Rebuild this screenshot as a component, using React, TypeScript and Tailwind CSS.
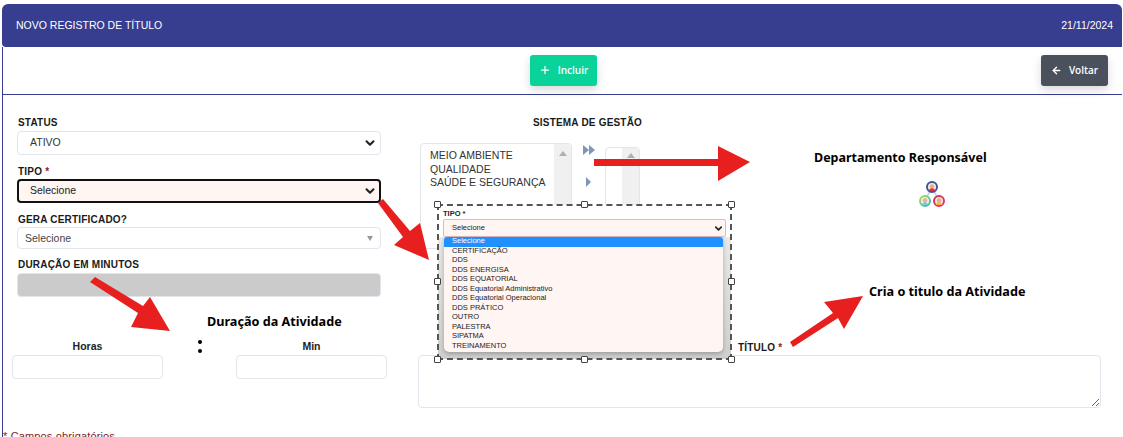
import { ArrowLeft, ChevronDown, Plus } from 'lucide-react'

const options = [
  'CERTIFICAÇÃO',
  'DDS',
  'DDS ENERGISA',
  'DDS EQUATORIAL',
  'DDS Equatorial Administrativo',
  'DDS Equatorial Operacional',
  'DDS PRÁTICO',
  'OUTRO',
  'PALESTRA',
  'SIPATMA',
  'TREINAMENTO'
]

function Label({ children }: { children: React.ReactNode }) {
  return <p className="h-[16px] pl-[1px] text-[10px] leading-[18px] font-bold tracking-[0.2px] text-[#1a1a1a]">{children}</p>
}

function Handle({ className }: { className: string }) {
  return <span className={`absolute w-[7px] h-[7px] rounded-[1px] border border-[#444] bg-white ${className}`} />
}

function OrgIcon() {
  return (
    <svg width="28" height="28" viewBox="0 0 28 28" fill="none">
      <defs>
        <linearGradient id="ringGreen" x1="0" y1="0" x2="1" y2="1">
          <stop offset="0" stopColor="#a8e04a" />
          <stop offset="1" stopColor="#2fb5c9" />
        </linearGradient>
        <linearGradient id="ringRed" x1="0" y1="0" x2="1" y2="1">
          <stop offset="0" stopColor="#c8394f" />
          <stop offset="1" stopColor="#e8307a" />
        </linearGradient>
      </defs>
      <path d="M14 8 L7 20 M14 8 L21 20" stroke="#c9cde8" strokeWidth="1.5" />
      <circle cx="14" cy="7" r="5" fill="#f6ece8" stroke="#3b5698" strokeWidth="2" />
      <circle cx="14" cy="6.5" r="2.2" fill="#eba78f" />
      <path d="M11 11 a3 2.8 0 0 1 6 0 Z" fill="#d9363e" />
      <circle cx="7" cy="21" r="5" fill="#f4f1e6" stroke="url(#ringGreen)" strokeWidth="2" />
      <circle cx="7" cy="20.5" r="2.4" fill="#e8b3a0" />
      <path d="M4 25 a3 2.8 0 0 1 6 0 Z" fill="#7cc7d8" />
      <circle cx="21" cy="21" r="5" fill="#f8ebe6" stroke="url(#ringRed)" strokeWidth="2" />
      <circle cx="21" cy="20.5" r="2.4" fill="#e8b08f" />
      <path d="M18 25 a3 2.8 0 0 1 6 0 Z" fill="#f0b93a" />
    </svg>
  )
}

export default function App() {
  return (
    <div className="relative h-[437px] overflow-hidden bg-white pt-1 pl-[2px] pr-px font-['Liberation_Sans',Arial,sans-serif] text-[#212529]">
      <div className="flex h-[43px] items-center justify-between rounded-t-md rounded-bl-sm bg-[#373d8f] pl-[14px] pr-[9px] text-[10.5px] text-white">
        <span>NOVO REGISTRO DE TÍTULO</span>
        <span>21/11/2024</span>
      </div>

      <div className="h-[390px] border-l border-[#373d8f]">
        <div className="flex h-[48px] items-center border-b border-[#373d8f] pb-[1px]">
          <button className="ml-[527px] flex h-[31px] w-[67px] items-center justify-center gap-[7px] rounded-[3px] bg-[#0ad39a] text-[10px] font-semibold text-white shadow-[0_4px_10px_rgba(0,0,0,0.15)] font-['Open_Sans',sans-serif]">
            <Plus size={12} strokeWidth={2.5} />
            Incluir
          </button>
          <button className="ml-auto mr-[14px] flex h-[31px] w-[67px] items-center justify-center gap-[7px] rounded-[3px] bg-[#4a505c] text-[10px] font-semibold text-white shadow-[0_4px_10px_rgba(0,0,0,0.15)] font-['Open_Sans',sans-serif]">
            <ArrowLeft size={11} strokeWidth={3} />
            Voltar
          </button>
        </div>

        <div className="flex pt-[19px]">
          <div className="ml-[9px] w-[375px] shrink-0">
            <div className="ml-[5px] w-[364px]">
              <Label>STATUS</Label>
              <div className="mt-[1px] flex h-[24px] items-center justify-between rounded-[4px] border border-[#e2e5ec] pl-[12px] pr-[3px] text-[10.5px] text-[#333]">
                ATIVO
                <ChevronDown size={14} strokeWidth={3.5} className="text-[#222]" />
              </div>
              <div className="mt-[8px]">
                <Label>
                  TIPO <span className="text-[#8b1a1a]">*</span>
                </Label>
              </div>
              <div className="flex h-[24px] items-center justify-between rounded-[4px] border-2 border-[#111] bg-[#fff5f3] pl-[11px] pr-[2px] text-[10.5px] text-[#222]">
                Selecione
                <ChevronDown size={14} strokeWidth={3.5} className="text-[#222]" />
              </div>
              <div className="mt-[8px]">
                <Label>GERA CERTIFICADO?</Label>
              </div>
              <div className="flex h-[22px] items-center justify-between rounded-[4px] border border-[#e2e5ec] pt-[1px] pl-[7px] pr-[7px] text-[10.5px] text-[#444]">
                Selecione
                <span className="h-0 w-0 border-x-[3px] border-t-[5px] border-x-transparent border-t-[#999]" />
              </div>
              <div className="mt-[7px]">
                <Label>DURAÇÃO EM MINUTOS</Label>
              </div>
              <div className="mt-[1px] h-[24px] rounded-[4px] border border-[#e2e5ec] bg-[#cbcbcb]" />
            </div>

            <div className="mt-[41px] flex items-start">
              <div className="w-[151px]">
                <p className="h-[17px] text-center text-[10.5px] leading-[17px] font-bold text-[#222]">Horas</p>
                <div className="h-[24px] rounded-[4px] border border-[#e2e5ec]" />
              </div>
              <div className="flex w-[73px] flex-col items-center gap-[5px] pt-[2px]">
                <span className="h-[4px] w-[4px] rounded-full bg-black" />
                <span className="h-[4px] w-[4px] rounded-full bg-black" />
              </div>
              <div className="w-[151px]">
                <p className="h-[17px] text-center text-[10.5px] leading-[17px] font-bold text-[#222]">Min</p>
                <div className="h-[24px] rounded-[4px] border border-[#e2e5ec]" />
              </div>
            </div>

            <p className="mt-[50px] -ml-[9px] text-[11px] leading-[14px] tracking-[0.15px] text-[#7f1d1d]">* Campos obrigatórios</p>
          </div>

          <div className="ml-[31px] w-[683px] shrink-0">
            <p className="h-[16px] w-[339px] text-center text-[10px] leading-[18px] font-bold tracking-[0.2px] text-[#1a1a1a]">
              SISTEMA DE GESTÃO
            </p>
            <div className="mt-[13px] flex h-[196px] items-start">
              <div className="ml-[2px] flex h-[106px] w-[152px] rounded-[4px] border border-[#e2e5ec] text-[10.5px] leading-[13.5px] text-[#333]">
                <div className="flex-1 pt-[5px] pl-[9px]">
                  <p>MEIO AMBIENTE</p>
                  <p>QUALIDADE</p>
                  <p>SAÚDE E SEGURANÇA</p>
                </div>
                <div className="flex w-[17px] justify-center bg-[#f0f0f0] pt-[7px]">
                  <span className="h-0 w-0 border-x-[4px] border-b-[5px] border-x-transparent border-b-[#b0b0b0]" />
                </div>
              </div>
              <div className="flex w-[33px] flex-col items-center pt-[2px]">
                <div className="flex">
                  <span className="h-0 w-0 border-y-[5px] border-l-[6px] border-y-transparent border-l-[#7f97b5]" />
                  <span className="h-0 w-0 border-y-[5px] border-l-[6px] border-y-transparent border-l-[#7f97b5]" />
                </div>
                <span className="mt-[22px] h-0 w-0 border-y-[5px] border-l-[5px] border-y-transparent border-l-[#7f97b5]" />
              </div>
              <div className="mt-[4px] flex h-[102px] w-[35px] justify-end rounded-[4px] border border-[#e2e5ec]">
                <div className="flex w-[17px] justify-center bg-[#f0f0f0] pt-[5px]">
                  <span className="h-0 w-0 border-x-[4px] border-b-[5px] border-x-transparent border-b-[#b0b0b0]" />
                </div>
              </div>
            </div>
            <div className="h-[14px] pl-[320px] text-[10px] leading-[17px] font-bold tracking-[0.2px] text-[#1a1a1a]">
              TÍTULO <span className="text-[#8b1a1a]">*</span>
            </div>
            <textarea className="mt-[2px] block h-[53px] w-[683px] rounded-[4px] border border-[#e2e5ec] outline-none" />
          </div>
        </div>
      </div>

      <div className="absolute left-[438px] top-[205px] h-[154px] w-[293px] bg-white">
        <div className="px-[5px] pt-[4px]">
          <p className="h-[9px] text-[7.5px] leading-[9px] font-bold">TIPO *</p>
          <div className="mt-[1px] flex h-[18px] items-center justify-between rounded-[2px] border border-[#e0b9b9] bg-[#fff5f3] pl-[8px] pr-[1px] text-[7.5px] text-[#222]">
            Selecione
            <ChevronDown size={11} strokeWidth={3.5} className="text-[#222]" />
          </div>
        </div>
        <div className="absolute bottom-0 left-0 right-0 h-[122px] bg-gradient-to-b from-[#e8e8e8] to-[#cfcfcf]" />
        <div className="absolute left-[6px] top-[32px] h-[115px] w-[279px] overflow-hidden rounded-b-[5px] rounded-t-[3px] bg-[#fff5f3] text-[7.5px] leading-[9.5px] text-[#222] shadow-[0_2px_4px_rgba(0,0,0,0.25)]">
          <p className="h-[10px] bg-[#1e90ff] pl-[8px] leading-[8px] text-white">Selecione</p>
          <div className="-mt-[1.5px]">
            {options.map(option => (
              <p className="pl-[8px]" key={option}>
                {option}
              </p>
            ))}
          </div>
        </div>
      </div>
      <div className="absolute left-[437px] top-[204px] h-[156px] w-[295px] border-2 border-dashed border-[#555]">
        <Handle className="-left-[5px] -top-[5px]" />
        <Handle className="left-[142px] -top-[5px]" />
        <Handle className="-right-[5px] -top-[5px]" />
        <Handle className="-left-[5px] top-[72px]" />
        <Handle className="-right-[5px] top-[72px]" />
        <Handle className="-left-[5px] -bottom-[5px]" />
        <Handle className="left-[142px] -bottom-[5px]" />
        <Handle className="-right-[5px] -bottom-[5px]" />
      </div>

      <svg className="pointer-events-none absolute left-0 top-0" width="1123" height="437" fill="#e71f1f">
        <polygon points="594,159 718,159 718,146 750,162 718,181 718,166 594,166" />
        <polygon points="378,203 383,199 410,231 420,223 429,260 394,245 403,237" />
        <polygon points="90,282 95,277 143,306 150,297 170,331 131,327 138,313" />
        <polygon points="790,342 833,313 824,302 863,296 844,329 838,318 793,347" />
      </svg>

      <p className="absolute left-[814px] top-[149px] text-[12.5px] leading-[17px] font-bold text-black font-['Noto_Sans',sans-serif]">Departamento Responsável</p>
      <p className="absolute left-[869px] top-[283px] text-[12.65px] leading-[17px] font-bold text-black font-['Noto_Sans',sans-serif]">Cria o titulo da Atividade</p>
      <p className="absolute left-[207px] top-[313px] text-[12.65px] leading-[17px] font-bold text-black font-['Noto_Sans',sans-serif]">Duração da Atividade</p>
      <div className="absolute left-[918px] top-[180px]">
        <OrgIcon />
      </div>
    </div>
  )
}
